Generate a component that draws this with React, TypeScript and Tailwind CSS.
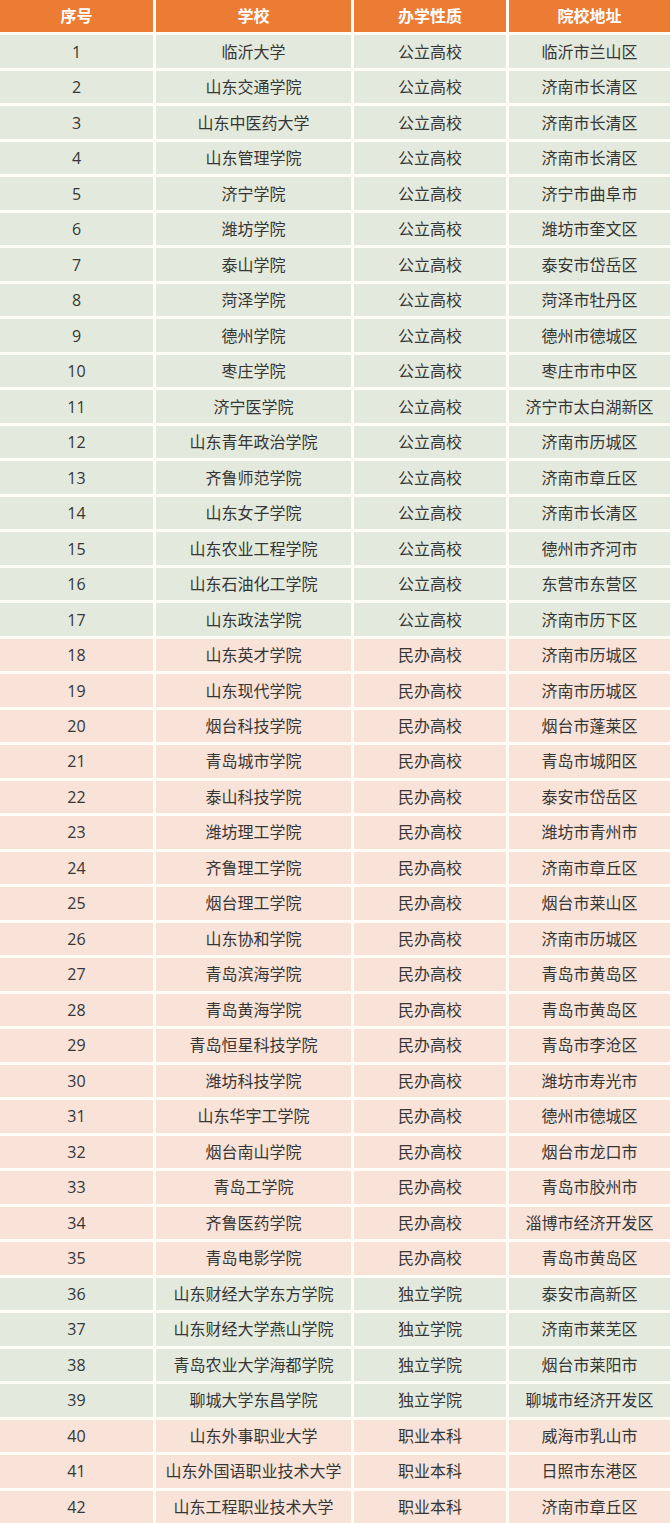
const rows: [string, string, string][] = [
  ["临沂大学", "公立高校", "临沂市兰山区"],
  ["山东交通学院", "公立高校", "济南市长清区"],
  ["山东中医药大学", "公立高校", "济南市长清区"],
  ["山东管理学院", "公立高校", "济南市长清区"],
  ["济宁学院", "公立高校", "济宁市曲阜市"],
  ["潍坊学院", "公立高校", "潍坊市奎文区"],
  ["泰山学院", "公立高校", "泰安市岱岳区"],
  ["菏泽学院", "公立高校", "菏泽市牡丹区"],
  ["德州学院", "公立高校", "德州市德城区"],
  ["枣庄学院", "公立高校", "枣庄市市中区"],
  ["济宁医学院", "公立高校", "济宁市太白湖新区"],
  ["山东青年政治学院", "公立高校", "济南市历城区"],
  ["齐鲁师范学院", "公立高校", "济南市章丘区"],
  ["山东女子学院", "公立高校", "济南市长清区"],
  ["山东农业工程学院", "公立高校", "德州市齐河市"],
  ["山东石油化工学院", "公立高校", "东营市东营区"],
  ["山东政法学院", "公立高校", "济南市历下区"],
  ["山东英才学院", "民办高校", "济南市历城区"],
  ["山东现代学院", "民办高校", "济南市历城区"],
  ["烟台科技学院", "民办高校", "烟台市蓬莱区"],
  ["青岛城市学院", "民办高校", "青岛市城阳区"],
  ["泰山科技学院", "民办高校", "泰安市岱岳区"],
  ["潍坊理工学院", "民办高校", "潍坊市青州市"],
  ["齐鲁理工学院", "民办高校", "济南市章丘区"],
  ["烟台理工学院", "民办高校", "烟台市莱山区"],
  ["山东协和学院", "民办高校", "济南市历城区"],
  ["青岛滨海学院", "民办高校", "青岛市黄岛区"],
  ["青岛黄海学院", "民办高校", "青岛市黄岛区"],
  ["青岛恒星科技学院", "民办高校", "青岛市李沧区"],
  ["潍坊科技学院", "民办高校", "潍坊市寿光市"],
  ["山东华宇工学院", "民办高校", "德州市德城区"],
  ["烟台南山学院", "民办高校", "烟台市龙口市"],
  ["青岛工学院", "民办高校", "青岛市胶州市"],
  ["齐鲁医药学院", "民办高校", "淄博市经济开发区"],
  ["青岛电影学院", "民办高校", "青岛市黄岛区"],
  ["山东财经大学东方学院", "独立学院", "泰安市高新区"],
  ["山东财经大学燕山学院", "独立学院", "济南市莱芜区"],
  ["青岛农业大学海都学院", "独立学院", "烟台市莱阳市"],
  ["聊城大学东昌学院", "独立学院", "聊城市经济开发区"],
  ["山东外事职业大学", "职业本科", "威海市乳山市"],
  ["山东外国语职业技术大学", "职业本科", "日照市东港区"],
  ["山东工程职业技术大学", "职业本科", "济南市章丘区"],
];

const headers = ["序号", "学校", "办学性质", "院校地址"];

export default function App() {
  return (
    <div
      className="grid h-[1523px] w-[670px] grid-cols-[153px_195px_152px_161px] grid-rows-[repeat(43,minmax(0,1fr))] gap-[3px] bg-[#fffdf6] text-[16px] text-[#363636]"
      style={{ fontFamily: '"Open Sans", "Noto Sans CJK SC", sans-serif' }}
    >
      {headers.map((h) => (
        <div
          key={h}
          className="flex items-center justify-center bg-[#ec7b34] font-bold text-white"
        >
          {h}
        </div>
      ))}
      {rows.map(([school, kind, addr], i) => {
        const green = kind === "公立高校" || kind === "独立学院";
        const bg = green ? "bg-[#e3eadd]" : "bg-[#f9e2d7]";
        return [String(i + 1), school, kind, addr].map((cell, j) => (
          <div
            key={`${i}-${j}`}
            className={`flex items-center justify-center whitespace-nowrap ${bg}`}
          >
            {cell}
          </div>
        ));
      })}
    </div>
  );
}
